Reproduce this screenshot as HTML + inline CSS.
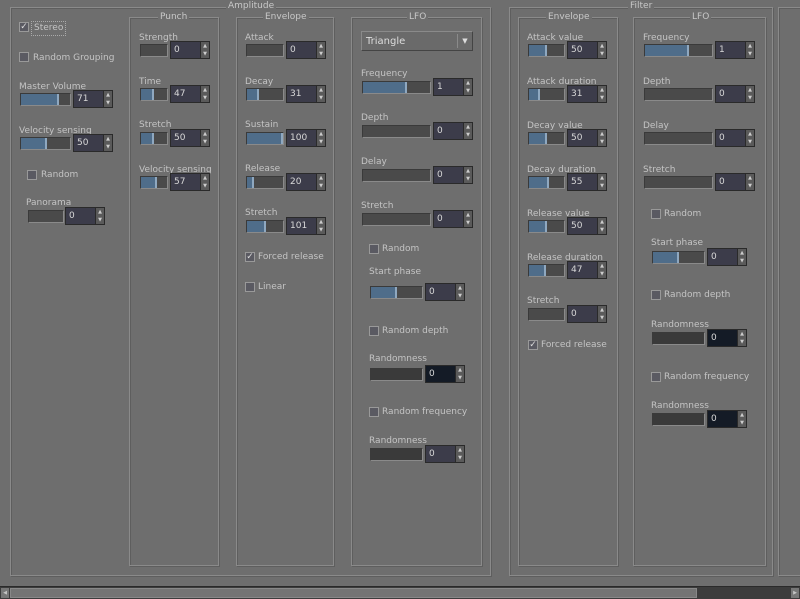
<!DOCTYPE html>
<html><head><meta charset="utf-8"><style>
*{box-sizing:border-box;margin:0;padding:0}
body{width:800px;height:599px;background:#6e6e6e;position:relative;overflow:hidden;font-family:"DejaVu Sans","Liberation Sans",sans-serif;font-size:9px;color:#c4c4c4}
.fr{position:absolute;border:1px solid #8a8a8a;box-shadow:inset 1px 1px 0 #5e5e5e,1px 1px 0 #5e5e5e}
.t{position:absolute;background:#6e6e6e;padding:0 2px;font-size:9px;color:#c8c8c8;line-height:10px}
.l{position:absolute;line-height:11px;white-space:nowrap;margin-top:2px}
.s{position:absolute;height:13px;background:#4a4a4a;border:1px solid #3a3a3a;border-right-color:#8a8a8a;border-bottom-color:#8a8a8a;overflow:hidden}
.s i{position:absolute;left:0;top:0;bottom:0;background:#4f6d8a;border-right:2px solid #8fa8c0}
.n{position:absolute;width:40px;height:18px;background:#3c3c4a;border:1px solid #2a2a2a;color:#d8d8d8;padding-left:3px;line-height:16px;font-size:9px}
.n.d{background:#141b26}
.n b{position:absolute;right:0;top:0;width:9px;height:16px;background:#5a5a5a;border-left:1px solid #2a2a2a;font-size:5px;line-height:8px;text-align:center;color:#ccc;font-weight:normal}
.c{position:absolute;width:10px;height:10px;border:1px solid #999;background:#5a5a62;font-size:9px;line-height:8px;text-align:center;color:#ddd}
</style></head><body>
<div class="fr" style="left:10px;top:7px;width:481px;height:569px"></div><div class="t" style="left:226px;top:1px">Amplitude</div>
<div class="fr" style="left:509px;top:7px;width:264px;height:569px"></div><div class="t" style="left:628px;top:1px">Filter</div>
<div class="fr" style="left:778px;top:7px;width:30px;height:569px"></div>
<div class="fr" style="left:129px;top:17px;width:90px;height:549px"></div><div class="t" style="left:158px;top:12px">Punch</div>
<div class="fr" style="left:236px;top:17px;width:98px;height:549px"></div><div class="t" style="left:263px;top:12px">Envelope</div>
<div class="fr" style="left:351px;top:17px;width:131px;height:549px"></div><div class="t" style="left:407px;top:12px">LFO</div>
<div class="fr" style="left:518px;top:17px;width:100px;height:549px"></div><div class="t" style="left:546px;top:12px">Envelope</div>
<div class="fr" style="left:633px;top:17px;width:133px;height:549px"></div><div class="t" style="left:690px;top:12px">LFO</div>

<div class="c" style="left:19px;top:22px">✓</div><div class="l" style="left:31px;top:19px;border:1px dotted #aaa;padding:1px 2px">Stereo</div>
<div class="c" style="left:19px;top:52px"></div><div class="l" style="left:33px;top:51px">Random Grouping</div>
<div class="l" style="left:19px;top:80px">Master Volume</div><div class="s" style="left:20px;top:93px;width:51px"><i style="width:38px"></i></div><div class="n" style="left:73px;top:90px">71<b>▲<br>▼</b></div>
<div class="l" style="left:19px;top:124px">Velocity sensing</div><div class="s" style="left:20px;top:137px;width:51px"><i style="width:26px"></i></div><div class="n" style="left:73px;top:134px">50<b>▲<br>▼</b></div>
<div class="c" style="left:27px;top:170px"></div><div class="l" style="left:41px;top:168px">Random</div>
<div class="l" style="left:26px;top:196px">Panorama</div><div class="s" style="left:28px;top:210px;width:36px"></div><div class="n" style="left:65px;top:207px">0<b>▲<br>▼</b></div>

<div class="l" style="left:139px;top:31px">Strength</div><div class="s" style="left:140px;top:44px;width:28px"></div><div class="n" style="left:170px;top:41px">0<b>▲<br>▼</b></div>
<div class="l" style="left:139px;top:75px">Time</div><div class="s" style="left:140px;top:88px;width:28px"><i style="width:13px"></i></div><div class="n" style="left:170px;top:85px">47<b>▲<br>▼</b></div>
<div class="l" style="left:139px;top:118px">Stretch</div><div class="s" style="left:140px;top:132px;width:28px"><i style="width:13px"></i></div><div class="n" style="left:170px;top:129px">50<b>▲<br>▼</b></div>
<div class="l" style="left:139px;top:163px">Velocity sensing</div><div class="s" style="left:140px;top:176px;width:28px"><i style="width:16px"></i></div><div class="n" style="left:170px;top:173px">57<b>▲<br>▼</b></div>

<div class="l" style="left:245px;top:31px">Attack</div><div class="s" style="left:246px;top:44px;width:38px"></div><div class="n" style="left:286px;top:41px">0<b>▲<br>▼</b></div>
<div class="l" style="left:245px;top:75px">Decay</div><div class="s" style="left:246px;top:88px;width:38px"><i style="width:12px"></i></div><div class="n" style="left:286px;top:85px">31<b>▲<br>▼</b></div>
<div class="l" style="left:245px;top:118px">Sustain</div><div class="s" style="left:246px;top:132px;width:38px"><i style="width:36px"></i></div><div class="n" style="left:286px;top:129px">100<b>▲<br>▼</b></div>
<div class="l" style="left:245px;top:162px">Release</div><div class="s" style="left:246px;top:176px;width:38px"><i style="width:7px"></i></div><div class="n" style="left:286px;top:173px">20<b>▲<br>▼</b></div>
<div class="l" style="left:245px;top:206px">Stretch</div><div class="s" style="left:246px;top:220px;width:38px"><i style="width:19px"></i></div><div class="n" style="left:286px;top:217px">101<b>▲<br>▼</b></div>
<div class="c" style="left:245px;top:252px">✓</div><div class="l" style="left:258px;top:250px">Forced release</div>
<div class="c" style="left:245px;top:282px"></div><div class="l" style="left:258px;top:280px">Linear</div>

<div style="position:absolute;left:361px;top:31px;width:112px;height:20px;background:#6a6a6a;border:1px solid #8a8a8a;border-right-color:#444;border-bottom-color:#444;padding-left:4px;line-height:19px;color:#ddd;font-size:10px">Triangle<span style="position:absolute;right:0;top:2px;width:15px;height:14px;border-left:1px solid #8a8a8a;font-size:7px;text-align:center;line-height:14px">▼</span></div>
<div class="l" style="left:361px;top:67px">Frequency</div><div class="s" style="left:362px;top:81px;width:69px"><i style="width:44px"></i></div><div class="n" style="left:433px;top:78px">1<b>▲<br>▼</b></div>
<div class="l" style="left:361px;top:111px">Depth</div><div class="s" style="left:362px;top:125px;width:69px"></div><div class="n" style="left:433px;top:122px">0<b>▲<br>▼</b></div>
<div class="l" style="left:361px;top:155px">Delay</div><div class="s" style="left:362px;top:169px;width:69px"></div><div class="n" style="left:433px;top:166px">0<b>▲<br>▼</b></div>
<div class="l" style="left:361px;top:199px">Stretch</div><div class="s" style="left:362px;top:213px;width:69px"></div><div class="n" style="left:433px;top:210px">0<b>▲<br>▼</b></div>
<div class="c" style="left:369px;top:244px"></div><div class="l" style="left:382px;top:242px">Random</div>
<div class="l" style="left:369px;top:265px">Start phase</div><div class="s" style="left:370px;top:286px;width:53px"><i style="width:26px"></i></div><div class="n" style="left:425px;top:283px">0<b>▲<br>▼</b></div>
<div class="c" style="left:369px;top:326px"></div><div class="l" style="left:382px;top:324px">Random depth</div>
<div class="l" style="left:369px;top:352px">Randomness</div><div class="s" style="left:370px;top:368px;width:53px;background:#3a3a3a"></div><div class="n d" style="left:425px;top:365px">0<b>▲<br>▼</b></div>
<div class="c" style="left:369px;top:407px"></div><div class="l" style="left:382px;top:405px">Random frequency</div>
<div class="l" style="left:369px;top:434px">Randomness</div><div class="s" style="left:370px;top:448px;width:53px;background:#3a3a3a"></div><div class="n" style="left:425px;top:445px">0<b>▲<br>▼</b></div>

<div class="l" style="left:527px;top:31px">Attack value</div><div class="s" style="left:528px;top:44px;width:37px"><i style="width:18px"></i></div><div class="n" style="left:567px;top:41px">50<b>▲<br>▼</b></div>
<div class="l" style="left:527px;top:75px">Attack duration</div><div class="s" style="left:528px;top:88px;width:37px"><i style="width:11px"></i></div><div class="n" style="left:567px;top:85px">31<b>▲<br>▼</b></div>
<div class="l" style="left:527px;top:119px">Decay value</div><div class="s" style="left:528px;top:132px;width:37px"><i style="width:18px"></i></div><div class="n" style="left:567px;top:129px">50<b>▲<br>▼</b></div>
<div class="l" style="left:527px;top:163px">Decay duration</div><div class="s" style="left:528px;top:176px;width:37px"><i style="width:20px"></i></div><div class="n" style="left:567px;top:173px">55<b>▲<br>▼</b></div>
<div class="l" style="left:527px;top:207px">Release value</div><div class="s" style="left:528px;top:220px;width:37px"><i style="width:18px"></i></div><div class="n" style="left:567px;top:217px">50<b>▲<br>▼</b></div>
<div class="l" style="left:527px;top:251px">Release duration</div><div class="s" style="left:528px;top:264px;width:37px"><i style="width:17px"></i></div><div class="n" style="left:567px;top:261px">47<b>▲<br>▼</b></div>
<div class="l" style="left:527px;top:294px">Stretch</div><div class="s" style="left:528px;top:308px;width:37px"></div><div class="n" style="left:567px;top:305px">0<b>▲<br>▼</b></div>
<div class="c" style="left:528px;top:340px">✓</div><div class="l" style="left:541px;top:338px">Forced release</div>

<div class="l" style="left:643px;top:31px">Frequency</div><div class="s" style="left:644px;top:44px;width:69px"><i style="width:44px"></i></div><div class="n" style="left:715px;top:41px">1<b>▲<br>▼</b></div>
<div class="l" style="left:643px;top:75px">Depth</div><div class="s" style="left:644px;top:88px;width:69px"></div><div class="n" style="left:715px;top:85px">0<b>▲<br>▼</b></div>
<div class="l" style="left:643px;top:119px">Delay</div><div class="s" style="left:644px;top:132px;width:69px"></div><div class="n" style="left:715px;top:129px">0<b>▲<br>▼</b></div>
<div class="l" style="left:643px;top:163px">Stretch</div><div class="s" style="left:644px;top:176px;width:69px"></div><div class="n" style="left:715px;top:173px">0<b>▲<br>▼</b></div>
<div class="c" style="left:651px;top:209px"></div><div class="l" style="left:664px;top:207px">Random</div>
<div class="l" style="left:651px;top:236px">Start phase</div><div class="s" style="left:652px;top:251px;width:53px"><i style="width:26px"></i></div><div class="n" style="left:707px;top:248px">0<b>▲<br>▼</b></div>
<div class="c" style="left:651px;top:290px"></div><div class="l" style="left:664px;top:288px">Random depth</div>
<div class="l" style="left:651px;top:318px">Randomness</div><div class="s" style="left:652px;top:332px;width:53px;background:#3a3a3a"></div><div class="n d" style="left:707px;top:329px">0<b>▲<br>▼</b></div>
<div class="c" style="left:651px;top:372px"></div><div class="l" style="left:664px;top:370px">Random frequency</div>
<div class="l" style="left:651px;top:399px">Randomness</div><div class="s" style="left:652px;top:413px;width:53px;background:#3a3a3a"></div><div class="n d" style="left:707px;top:410px">0<b>▲<br>▼</b></div>

<div style="position:absolute;left:0;top:586px;width:800px;height:13px;background:#3c3c3c;border-top:1px solid #2a2a2a"></div>
<div style="position:absolute;left:1px;top:588px;width:8px;height:10px;background:#777;font-size:5px;line-height:10px;text-align:center">◀</div>
<div style="position:absolute;left:10px;top:588px;width:687px;height:10px;background:#747474;border:1px solid #888"></div>
<div style="position:absolute;left:791px;top:588px;width:8px;height:10px;background:#777;font-size:5px;line-height:10px;text-align:center">▶</div>
</body></html>
